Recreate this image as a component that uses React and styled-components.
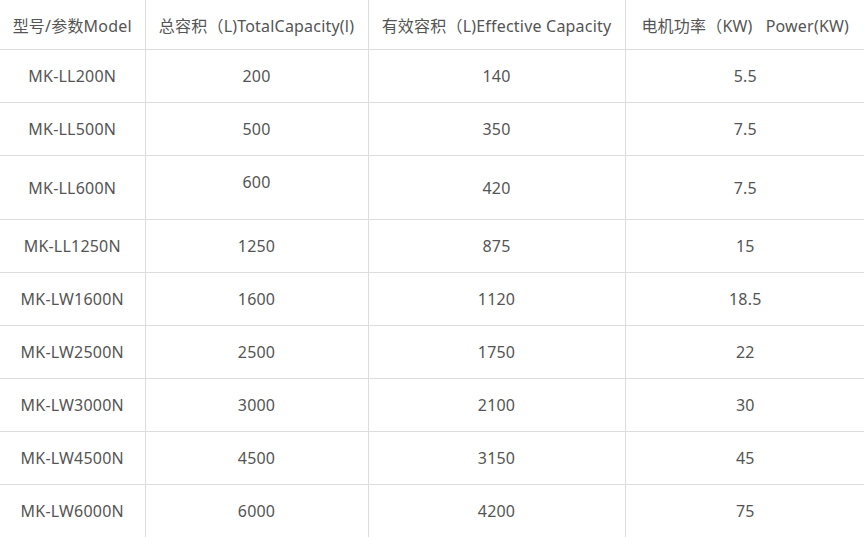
import React from 'react';
import styled, { createGlobalStyle } from 'styled-components';

const GlobalStyle = createGlobalStyle`
  html, body {
    margin: 0;
    padding: 0;
    background: #fff;
  }
  body {
    font-family: "Noto Sans", "Noto Sans CJK SC", sans-serif;
    overflow: hidden;
  }
`;

const Table = styled.table`
  width: 865px;
  border-collapse: collapse;
  table-layout: fixed;
  color: #555;
  font-size: 16px;
  letter-spacing: 0.2px;
`;

const Col = styled.col`
  width: ${p => p.$w}px;
`;

const HeadCell = styled.th`
  height: 49px;
  padding: 0;
  font-weight: normal;
  text-align: center;
  white-space: pre;
  border-right: 1px solid #ddd;
  border-bottom: 1px solid #ddd;
  &:last-child { border-right: none; }
`;

const Cell = styled.td`
  height: ${p => p.$tall ? 63 : 52}px;
  padding: 0;
  text-align: center;
  border-right: 1px solid #ddd;
  border-bottom: 1px solid #ddd;
  &:last-child { border-right: none; }
`;

const Spacer = styled.div`
  height: 11px;
`;

const widths = [145, 223, 257, 240];

const headers = [
  '型号/参数Model',
  '总容积（L)TotalCapacity(l)',
  '有效容积（L)Effective Capacity',
  '电机功率（KW)   Power(KW)',
];

const rows = [
  ['MK-LL200N', '200', '140', '5.5'],
  ['MK-LL500N', '500', '350', '7.5'],
  ['MK-LL600N', '600', '420', '7.5'],
  ['MK-LL1250N', '1250', '875', '15'],
  ['MK-LW1600N', '1600', '1120', '18.5'],
  ['MK-LW2500N', '2500', '1750', '22'],
  ['MK-LW3000N', '3000', '2100', '30'],
  ['MK-LW4500N', '4500', '3150', '45'],
  ['MK-LW6000N', '6000', '4200', '75'],
];

const App = () => (
  <>
    <GlobalStyle />
    <Table>
      <colgroup>
        {widths.map((w, i) => <Col key={i} $w={w} />)}
      </colgroup>
      <thead>
        <tr>
          {headers.map(h => <HeadCell key={h}>{h}</HeadCell>)}
        </tr>
      </thead>
      <tbody>
        {rows.map(r => {
          const tall = r[0] === 'MK-LL600N';
          return (
            <tr key={r[0]}>
              {r.map((v, i) => (
                <Cell key={i} $tall={tall}>
                  {v}
                  {tall && i === 1 && <Spacer />}
                </Cell>
              ))}
            </tr>
          );
        })}
      </tbody>
    </Table>
  </>
);

export default App;
